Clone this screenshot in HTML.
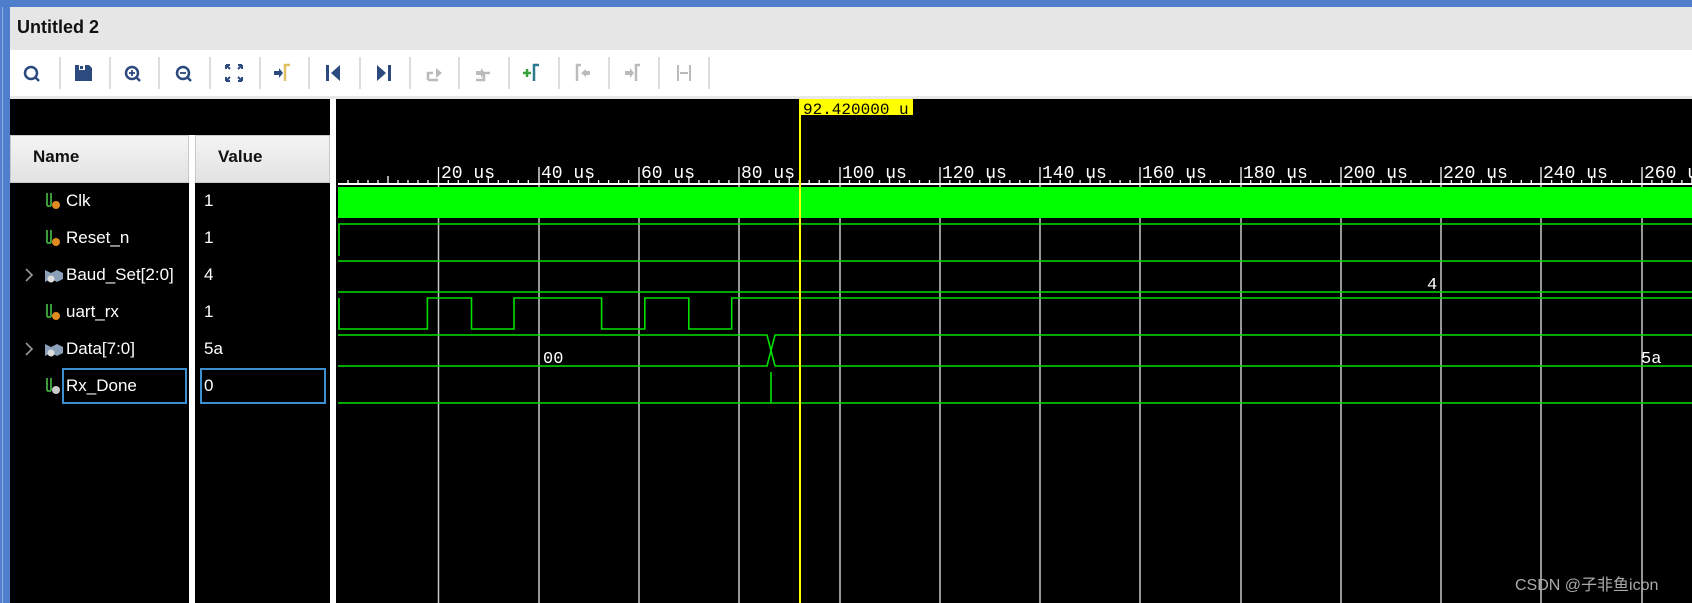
<!DOCTYPE html>
<html><head><meta charset="utf-8"><style>
*{margin:0;padding:0;box-sizing:border-box}
body{width:1692px;height:603px;overflow:hidden;background:#000;position:relative;font-family:"Liberation Sans","Noto Sans CJK SC",sans-serif}
.a{position:absolute}
.sep{position:absolute;top:57px;width:2px;height:32px;background:#ddd}
.nm{position:absolute;color:#fff;font-size:17px;left:66px}
.vl{position:absolute;color:#fff;font-size:17px;left:204px}
</style></head><body>
<div class="a" style="left:0;top:0;width:1692px;height:7px;background:#4f7fcc"></div>
<div class="a" style="left:0;top:0;width:10px;height:603px;background:#4f7fcc"></div>
<div class="a" style="left:2px;top:7px;width:1px;height:596px;background:#8fb0e0"></div>
<div class="a" style="left:10px;top:7px;width:1682px;height:43px;background:#e6e6e6"></div>
<div class="a" style="left:17px;top:14px;font-size:18px;font-weight:bold;color:#111;line-height:26px">Untitled 2</div>
<div class="a" style="left:10px;top:50px;width:1682px;height:46px;background:#fff"></div>
<div class="a" style="left:10px;top:96px;width:1682px;height:3px;background:#e8e8e8"></div>
<div class="sep" style="left:59px"></div><div class="sep" style="left:109px"></div><div class="sep" style="left:158px"></div><div class="sep" style="left:209px"></div><div class="sep" style="left:259px"></div><div class="sep" style="left:308px"></div><div class="sep" style="left:359px"></div><div class="sep" style="left:409px"></div><div class="sep" style="left:458px"></div><div class="sep" style="left:508px"></div><div class="sep" style="left:558px"></div><div class="sep" style="left:608px"></div><div class="sep" style="left:658px"></div><div class="sep" style="left:708px"></div>
<svg class="a" style="left:0;top:50px" width="720" height="46">
<g fill="none" stroke="#2c4a7e" stroke-width="2.5">
<circle cx="31" cy="23" r="6"/><line x1="35" y1="27" x2="39" y2="31"/>
<circle cx="132" cy="23" r="6"/><line x1="136" y1="27" x2="140" y2="31"/><line x1="129" y1="23" x2="135" y2="23" stroke-width="1.8"/><line x1="132" y1="20" x2="132" y2="26" stroke-width="1.8"/>
<circle cx="183" cy="23" r="6"/><line x1="187" y1="27" x2="191" y2="31"/><line x1="180" y1="23" x2="186" y2="23" stroke-width="1.8"/>
</g>
<path d="M75 15h14l3 3v13h-17z" fill="#2c4a7e"/><rect x="79" y="15" width="6" height="5" fill="#fff"/><rect x="80" y="16" width="3" height="3" fill="#2c4a7e"/>
<g stroke="#2c4a7e" stroke-width="2" fill="none"><path d="M226 15l4 4M242 15l-4 4M226 31l4-4M242 31l-4-4"/><path d="M226 15h4M226 15v4M242 15h-4M242 15v4M226 31h4M226 31v-4M242 31h-4M242 31v-4"/></g>
<path d="M274 21h5v-3l4 5-4 5v-3h-5z" fill="#2c4a7e"/><path d="M285 31V15h5" stroke="#e0c060" stroke-width="2.5" fill="none"/>
<rect x="326" y="15" width="3" height="16" fill="#2c4a7e"/><path d="M340 15v16l-9-8z" fill="#2c4a7e"/>
<path d="M377 15v16l9-8z" fill="#2c4a7e"/><rect x="388" y="15" width="3" height="16" fill="#2c4a7e"/>
<path d="M428 30h10M428 30v-7h5" stroke="#bbb" stroke-width="2.5" fill="none"/><path d="M436 18l6 5-6 5z" fill="#bbb"/>
<path d="M476 30h8v-7h6" stroke="#bbb" stroke-width="2.5" fill="none"/><path d="M476 21h5v-3l4 5-4 5v-3h-5z" fill="#bbb"/>
<path d="M523 23h8M527 19v8" stroke="#3aa03a" stroke-width="2.5"/><path d="M534 31V15h5" stroke="#2c7a8e" stroke-width="2.5" fill="none"/>
<path d="M577 31V15h4" stroke="#bbb" stroke-width="2.5" fill="none"/><path d="M581 23l5-4v8z M585 21h5v4h-5z" fill="#bbb"/>
<path d="M625 21h5v-3l4 5-4 5v-3h-5z" fill="#bbb"/><path d="M636 31V15h4" stroke="#bbb" stroke-width="2.5" fill="none"/>
<path d="M678 15v16M690 15v16M680 23h8" stroke="#bbb" stroke-width="2" fill="none"/>
</svg>
<div class="a" style="left:10px;top:135px;width:179px;height:48px;background:linear-gradient(#f4f4f4,#e2e2e2);border:1px solid #c8c8c8"></div>
<div class="a" style="left:189px;top:135px;width:6px;height:468px;background:#fff"></div>
<div class="a" style="left:195px;top:135px;width:135px;height:48px;background:linear-gradient(#f4f4f4,#e2e2e2);border:1px solid #c8c8c8"></div>
<div class="a" style="left:330px;top:99px;width:6px;height:504px;background:#fff"></div>
<div class="a" style="left:33px;top:147px;font-size:17px;font-weight:bold;color:#111">Name</div>
<div class="a" style="left:218px;top:147px;font-size:17px;font-weight:bold;color:#111">Value</div>
<svg class="a" style="left:0;top:0" width="190" height="420">
<g stroke="#999" stroke-width="1.6" fill="none"><path d="M26 269l6 6-6 6M26 343l6 6-6 6"/></g>
<g stroke="#3a9a3a" stroke-width="2" fill="none">
<path d="M47 193v13M51 193v13M47 206h4"/>
<path d="M47 230v13M51 230v13M47 243h4"/>
<path d="M47 304v13M51 304v13M47 317h4"/>
<path d="M47 378v13M51 378v13M47 391h4"/>
</g>
<g fill="#e08a20"><circle cx="56" cy="205" r="4"/><circle cx="56" cy="242" r="4"/><circle cx="56" cy="316" r="4"/></g>
<circle cx="56" cy="390" r="4" fill="#ccc"/>
<g fill="#8aa0b8"><path d="M45 270l6 3 6-3 6 3v6l-6 3-6-3-6 3z"/><path d="M45 344l6 3 6-3 6 3v6l-6 3-6-3-6 3z"/></g>
<g fill="#ddd"><circle cx="51" cy="279" r="3.5"/><circle cx="51" cy="353" r="3.5"/></g>
</svg>
<div class="nm" style="top:191px">Clk</div><div class="vl" style="top:191px">1</div>
<div class="nm" style="top:228px">Reset_n</div><div class="vl" style="top:228px">1</div>
<div class="nm" style="top:265px">Baud_Set[2:0]</div><div class="vl" style="top:265px">4</div>
<div class="nm" style="top:302px">uart_rx</div><div class="vl" style="top:302px">1</div>
<div class="nm" style="top:339px">Data[7:0]</div><div class="vl" style="top:339px">5a</div>
<div class="a" style="left:62px;top:368px;width:125px;height:36px;border:2px solid #3d8fd0"></div>
<div class="a" style="left:200px;top:368px;width:126px;height:36px;border:2px solid #3d8fd0"></div>
<div class="nm" style="top:376px">Rx_Done</div><div class="vl" style="top:376px">0</div>
<svg class="a" style="left:0;top:0" width="1692" height="603">
<g stroke="#c8c8c8" stroke-width="1.5">
<line x1="438.5" y1="184" x2="438.5" y2="603"/><line x1="539" y1="184" x2="539" y2="603"/><line x1="639" y1="184" x2="639" y2="603"/><line x1="739" y1="184" x2="739" y2="603"/><line x1="840" y1="184" x2="840" y2="603"/><line x1="940" y1="184" x2="940" y2="603"/><line x1="1040" y1="184" x2="1040" y2="603"/><line x1="1140" y1="184" x2="1140" y2="603"/><line x1="1241" y1="184" x2="1241" y2="603"/><line x1="1341" y1="184" x2="1341" y2="603"/><line x1="1441" y1="184" x2="1441" y2="603"/><line x1="1541" y1="184" x2="1541" y2="603"/><line x1="1642" y1="184" x2="1642" y2="603"/>
</g>
<line x1="338" y1="184" x2="1692" y2="184" stroke="#fff" stroke-width="2"/>
<g id="tk" stroke="#fff" stroke-width="1.3">
<path d="M348 184v-4M358 184v-4M368 184v-4M378 184v-4M388 184v-8M398 184v-4M408 184v-4M418 184v-4M428 184v-4"/>
</g>
<use href="#tk" x="100.3"/><use href="#tk" x="200.6"/><use href="#tk" x="300.9"/><use href="#tk" x="401.2"/><use href="#tk" x="501.5"/><use href="#tk" x="601.8"/><use href="#tk" x="702.1"/><use href="#tk" x="802.4"/><use href="#tk" x="902.7"/><use href="#tk" x="1003"/><use href="#tk" x="1103.3"/><use href="#tk" x="1203.6"/><use href="#tk" x="1303.9"/>
<g stroke="#fff" stroke-width="1.3"><path d="M438.5 184v-17M539 184v-17M639 184v-17M739 184v-17M840 184v-17M940 184v-17M1040 184v-17M1140 184v-17M1241 184v-17M1341 184v-17M1441 184v-17M1541 184v-17M1642 184v-17"/></g>
<g fill="#fff" font-family="Liberation Mono" font-size="18">
<text x="441" y="178">20 us</text><text x="541" y="178">40 us</text><text x="641" y="178">60 us</text><text x="741" y="178">80 us</text><text x="842" y="178">100 us</text><text x="942" y="178">120 us</text><text x="1042" y="178">140 us</text><text x="1142" y="178">160 us</text><text x="1243" y="178">180 us</text><text x="1343" y="178">200 us</text><text x="1443" y="178">220 us</text><text x="1543" y="178">240 us</text><text x="1644" y="178">260 us</text>
</g>
<rect x="338" y="187" width="1354" height="31" fill="#00ff00"/>
<g stroke="#00e000" stroke-width="1.6" fill="none">
<path d="M339 256V224H1692"/>
<path d="M338 261H1692M338 292H1692"/>
<path d="M339 298V329H427.4V298H471.5V329H514V298H601.6V329H644.8V298H688.8V329H731.7V298H1692"/>
<path d="M338 335H767L775 366M338 366H767L775 335H1692M775 366H1692"/>
<path d="M338 403H1692M771 372V403"/>
</g>
<g fill="#fff" font-family="Liberation Mono" font-size="17"><text x="1427" y="289">4</text><text x="543" y="363">00</text><text x="1641" y="363">5a</text></g>
<line x1="800" y1="99" x2="800" y2="603" stroke="#ffff00" stroke-width="2"/>
<rect x="801" y="99" width="112" height="16" fill="#ffff00"/>
<text x="803" y="114" font-family="Liberation Mono" font-size="16" fill="#000">92.420000 u</text>
<text x="1515" y="590" font-family="Liberation Sans,Noto Sans CJK SC,sans-serif" font-size="16" fill="#aaa">CSDN @子非鱼icon</text>
</svg>
</body></html>
